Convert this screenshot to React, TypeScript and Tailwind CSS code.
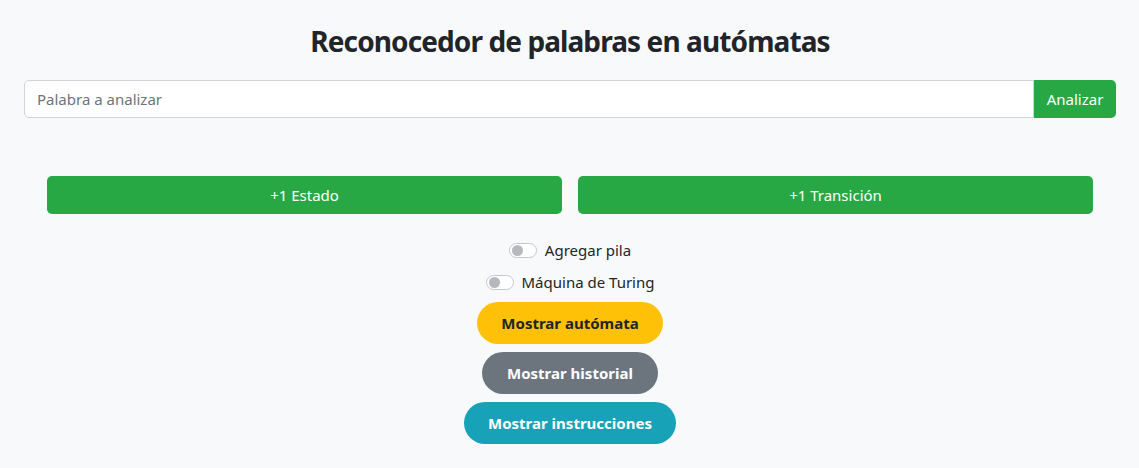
import { useState } from 'react';

export default function App() {
  const [pila, setPila] = useState(false);
  const [turing, setTuring] = useState(false);

  const Toggle = ({ on, onClick, label }: { on: boolean; onClick: () => void; label: string }) => (
    <label className="flex items-center gap-2 cursor-pointer" onClick={onClick}>
      <span
        className={`w-[28px] h-[15px] rounded-full border flex items-center px-[2px] ${
          on ? 'bg-[#0d6efd] border-[#0d6efd] justify-end' : 'bg-white border-[#c4c8cc] justify-start'
        }`}
      >
        <span className={`w-[11px] h-[11px] rounded-full ${on ? 'bg-white' : 'bg-[#b5b9bd]'}`} />
      </span>
      <span className="text-[15px] text-[#212529]">{label}</span>
    </label>
  );

  return (
    <div className="min-h-[468px] bg-[#f8f9fa] pl-[24px] pr-[23px] pt-[21px] font-['Noto_Sans',sans-serif] text-[#212529]">
      <h2 className="text-center text-[28px] font-bold leading-[40px] mb-[19px] tracking-[-0.9px]">
        Reconocedor de palabras en autómatas
      </h2>

      <div className="flex h-[38px]">
        <input
          type="text"
          placeholder="Palabra a analizar"
          className="flex-1 bg-white border border-[#ced4da] rounded-l-[5px] px-3 text-[15px] placeholder:text-[#6c757d] outline-none"
        />
        <button className="w-[82px] bg-[#28a745] text-white text-[15px] rounded-r-[5px]">Analizar</button>
      </div>

      <div className="flex gap-[16px] px-[23px] mt-[58px]">
        <button className="flex-1 h-[38px] bg-[#28a745] text-white text-[15px] rounded-[5px]">+1 Estado</button>
        <button className="flex-1 h-[38px] bg-[#28a745] text-white text-[15px] rounded-[5px]">+1 Transición</button>
      </div>

      <div className="flex flex-col items-center mt-[25px]">
        <div className="h-[22px] flex items-center">
          <Toggle on={pila} onClick={() => setPila(!pila)} label="Agregar pila" />
        </div>
        <div className="h-[22px] flex items-center mt-[10px]">
          <Toggle on={turing} onClick={() => setTuring(!turing)} label="Máquina de Turing" />
        </div>
        <button className="mt-[9px] w-[186px] h-[42px] rounded-full bg-[#ffc107] text-[#212529] font-bold text-[15px]">
          Mostrar autómata
        </button>
        <button className="mt-[8px] w-[176px] h-[42px] rounded-full bg-[#6c757d] text-white font-bold text-[15px]">
          Mostrar historial
        </button>
        <button className="mt-[8px] w-[212px] h-[42px] rounded-full bg-[#17a2b8] text-white font-bold text-[15px]">
          Mostrar instrucciones
        </button>
      </div>
    </div>
  );
}
